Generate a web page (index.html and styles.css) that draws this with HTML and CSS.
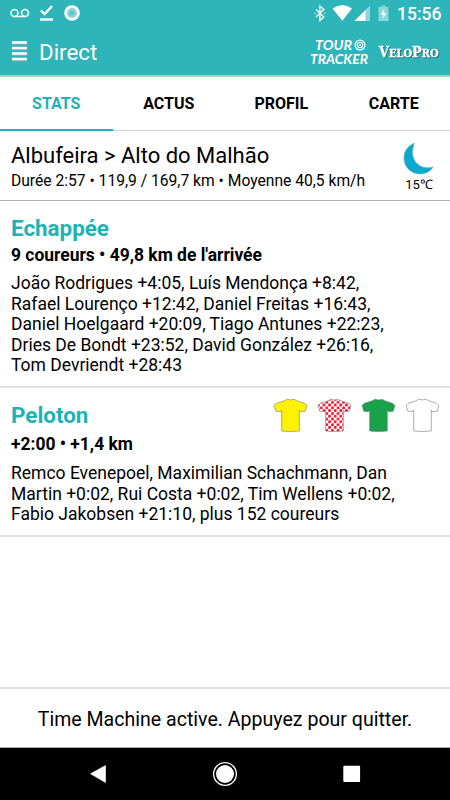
FILE: index.html
```html
<!DOCTYPE html>
<html lang="fr">
<head>
<meta charset="utf-8">
<title>Direct</title>
<link rel="stylesheet" href="styles.css">
</head>
<body>
<svg class="defs" width="0" height="0" aria-hidden="true">
  <defs>
    <pattern id="dots" width="5.6" height="5.6" patternUnits="userSpaceOnUse">
      <rect width="5.6" height="5.6" fill="#fff"/>
      <circle cx="1.4" cy="1.4" r="1.5" fill="#f0142d"/>
      <circle cx="4.2" cy="4.2" r="1.5" fill="#f0142d"/>
    </pattern>
    <path id="jersey" d="M13.500 1.200Q17.500 2.600 21.500 1.200L23 2.500L31.500 5.200L34 7.500L32.200 13.200L27.300 13.700L26.300 12.200V33Q17.500 34 8.700 33V12.200L7.700 13.700L2.800 13.200L1 7.500L3.500 5.200L12 2.500Z"/>
  </defs>
</svg>
<div class="screen">
  <header class="top">
    <div class="status">
      <svg class="status-left" width="90" height="28" viewBox="0 0 90 28" fill="none" stroke="#fff">
        <g stroke-width="1.500"><circle cx="14.500" cy="13" r="3.500"/><circle cx="25" cy="13" r="3.500"/><path d="M14.500 16.500H25"/></g>
        <path d="M41 10.500l3.600 3.600 7.400-8" stroke-width="2.300"/><path d="M40 19.500h13" stroke-width="2.400"/>
        <circle cx="72" cy="13" r="7.800" fill="#fff" stroke="none"/><circle cx="72" cy="13" r="5" fill="#8bd6d9" stroke="none"/><circle cx="72" cy="13" r="2.600" fill="#5fc6ca" stroke="none"/>
      </svg>
      <svg class="status-right" width="84" height="28" viewBox="312 0 84 28">
        <path d="M316 9.500l7.800 7.500-3.900 3.500V6l3.900 3.500-7.800 7.500M315 12.800v.9M324.700 12.800v.9" fill="none" stroke="#fff" stroke-width="1.300"/>
        <path d="M332.500 8.500Q342.500 1.500 352 8.500L342.300 20.800Z" fill="#fff"/>
        <path d="M370 5.500V21H354.500Z" fill="#8bd6d9"/><path d="M365.500 10V21H354.500Z" fill="#fff"/>
        <path d="M381.500 5.500h4v1.500h3v14h-10V7h3Z" fill="#8bd6d9"/><path d="M384.600 8.500l-4 6h2.700l-.8 4.500 4-6h-2.700Z" fill="#fff"/>
      </svg>
      <span class="clock">15:56</span>
    </div>
    <div class="appbar">
      <svg class="menu" width="16" height="22" viewBox="0 0 16 22"><path d="M0 3.500h15M0 9h15M0 14.500h15M0 20h15" stroke="#7aaeb0" stroke-width="3"/><path d="M0 2.500h15M0 8h15M0 13.500h15M0 19h15" stroke="#fff" stroke-width="2.400"/></svg>
      <h1>Direct</h1>
      <svg class="brands" width="140" height="46" viewBox="305 28 140 46">
        <g class="tour"><text x="315" y="48.500" textLength="37" lengthAdjust="spacingAndGlyphs">TOUR</text><text x="310" y="63" textLength="58" lengthAdjust="spacingAndGlyphs">TRACKER</text></g>
        <g fill="none" stroke="#fff"><circle cx="360" cy="44" r="4.900" stroke-width="1.200"/><circle cx="360" cy="44" r="2.700" stroke-width="1.100"/><circle cx="360" cy="44" r=".9" fill="#fff" stroke="none"/></g>
        <g class="velo"><text x="379" y="55.500" textLength="59.500" lengthAdjust="spacingAndGlyphs"><tspan class="cap">V</tspan>ELO<tspan class="cap">P</tspan>RO</text></g>
      </svg>
    </div>
  </header>
  <nav class="tabs"><span class="tab active">STATS</span><span class="tab">ACTUS</span><span class="tab">PROFIL</span><span class="tab">CARTE</span></nav>
  <section class="stage">
    <div class="stage-text"><h2>Albufeira &gt; Alto do Malhão</h2><p>Durée 2:57 • 119,9 / 169,7 km • Moyenne 40,5 km/h</p></div>
    <div class="weather">
      <svg width="32" height="34" viewBox="0 0 32 34"><path d="M11.500 1.300C5 3.500 1 9 1 16C1 25 8 32 17 32C23 32 28 29 30 25C16 29 5 17 11.500 1.300Z" fill="#09a9d0" stroke="#7ba9b5" stroke-width=".6"/></svg>
      <span>15℃</span>
    </div>
  </section>
  <section class="group breakaway">
    <h3>Echappée</h3>
    <p class="gap">9 coureurs • 49,8 km de l'arrivée</p>
    <p class="riders"><span>João Rodrigues +4:05, Luís Mendonça +8:42,</span><span>Rafael Lourenço +12:42, Daniel Freitas +16:43,</span><span>Daniel Hoelgaard +20:09, Tiago Antunes +22:23,</span><span>Dries De Bondt +23:52, David González +26:16,</span><span>Tom Devriendt +28:43</span></p>
  </section>
  <section class="group peloton">
    <div class="group-head"><h3>Peloton</h3>
      <div class="jerseys">
        <svg viewBox="0 0 35 35"><use href="#jersey" fill="#fff200"/></svg>
        <svg viewBox="0 0 35 35"><use href="#jersey" fill="url(#dots)"/></svg>
        <svg viewBox="0 0 35 35"><use href="#jersey" fill="#18a34a"/></svg>
        <svg viewBox="0 0 35 35"><use href="#jersey" fill="#fff"/></svg>
      </div>
    </div>
    <p class="gap">+2:00 • +1,4 km</p>
    <p class="riders"><span>Remco Evenepoel, Maximilian Schachmann, Dan</span><span>Martin +0:02, Rui Costa +0:02, Tim Wellens +0:02,</span><span>Fabio Jakobsen +21:10, plus 152 coureurs</span></p>
  </section>
  <div class="spacer"></div>
  <div class="machine">Time Machine active. Appuyez pour quitter.</div>
  <footer class="navbar">
    <svg width="450" height="52" viewBox="0 0 450 52" fill="#fff"><path d="M90.500 25.800L105.500 17.500V34.500Z" stroke="#fff" stroke-width=".6" stroke-linejoin="round"/><circle cx="225" cy="26" r="9"/><circle cx="225" cy="26" r="11.400" fill="none" stroke="#fff" stroke-width="1.300"/><rect x="343.300" y="17.700" width="16.800" height="16.300" rx="1"/></svg>
  </footer>
</div>
</body>
</html>
```

FILE: styles.css
```css
* { box-sizing: border-box; margin: 0; padding: 0; }
body { width: 450px; height: 800px; overflow: hidden; background: #fff; color: #000; font-family: Roboto, sans-serif; }
svg { display: block; flex: none; }
.defs { position: absolute; }
.screen { height: 800px; display: flex; flex-direction: column; white-space: nowrap; }
.top { height: 77px; background: #2db5b9; border-bottom: 2px solid #bfc3c4; color: #fff; }
.status { height: 28px; display: flex; align-items: center; }
.status-right { margin-left: auto; }
.clock { width: 54px; padding-left: 1px; font-size: 17.5px; font-weight: 500; line-height: 28px; }
.appbar { height: 47px; display: flex; align-items: center; padding: 0 5px 0 12px; }
.menu { margin-bottom: 2px; }
h1 { margin-left: 11px; font-size: 22.3px; font-weight: 400; line-height: 46px; }
.brands { margin-left: auto; }
.tour { fill: #fff; font: italic 700 13.4px Lato, sans-serif; }
.velo { fill: #fff; stroke: #fff; stroke-width: .3px; font: 700 11.2px "DejaVu Serif", serif; filter: drop-shadow(1px 1px 0 #326f75); }
.velo .cap { font-size: 14.5px; }
.tabs { height: 54px; display: flex; border-bottom: 1px solid #d5d5d5; }
.tab { width: 112.5px; height: 54px; line-height: 53px; text-align: center; font-size: 16px; font-weight: 700; }
.tab.active { color: #1db3b6; border-bottom: 2px solid #1db3b6; }
.stage { height: 70px; display: flex; padding: 11px 0 0 11px; border-bottom: 1px solid #b4b4b4; }
.stage-text { flex: 1; }
h2 { font-size: 22px; font-weight: 400; line-height: 27px; }
.stage p { font-size: 15.63px; line-height: 24px; }
.weather { width: 62px; display: flex; flex-direction: column; align-items: center; font-size: 13px; line-height: 18px; }
.group { padding-left: 11px; }
.breakaway { height: 187px; padding-top: 12px; border-bottom: 2px solid #e1e1e1; }
.peloton { height: 149px; padding-top: 12px; border-bottom: 2px solid #e1e1e1; }
h3 { font-size: 22.4px; font-weight: 700; line-height: 30px; color: #1db3b6; }
.group-head { display: flex; height: 30px; justify-content: space-between; }
.jerseys { display: flex; gap: 9px; padding-right: 10px; margin-top: -2px; }
.jerseys svg { width: 35px; height: 35px; }
.jerseys use { stroke: #777; stroke-width: .6px; }
.gap { font-size: 17.45px; font-weight: 700; line-height: 24px; }
.peloton .gap { line-height: 29px; }
.riders { margin-top: 6px; font-size: 17.5px; line-height: 20.5px; }
.peloton .riders { margin-top: 4px; }
.riders span { display: block; }
.spacer { flex: 1; }
.machine { height: 61px; border-top: 2px solid #dedede; border-bottom: 1px solid #aaa; line-height: 61px; text-align: center; font-size: 19.57px; }
.navbar { height: 52px; background: #000; }
```
